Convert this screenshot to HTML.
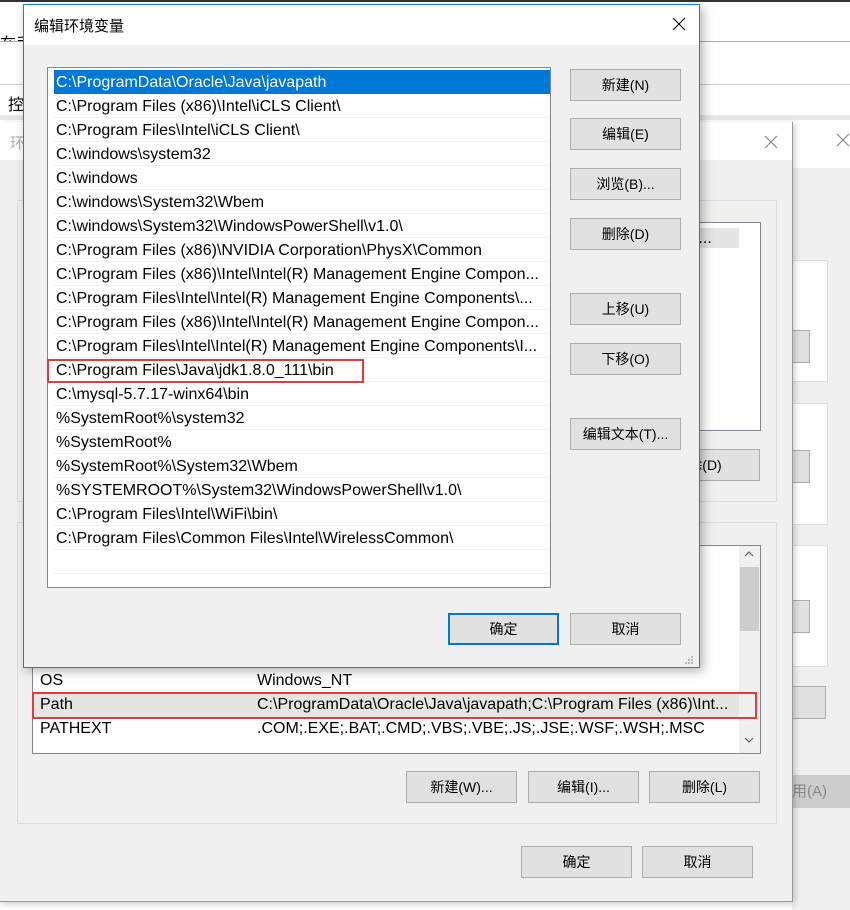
<!DOCTYPE html>
<html><head><meta charset="utf-8"><style>
*{box-sizing:border-box;margin:0;padding:0}
body{width:850px;height:906px;position:relative;overflow:hidden;background:#fff;font-family:"Liberation Sans","Noto Sans CJK SC",sans-serif;font-size:14px;color:#000}
.a{position:absolute}
.btn{position:absolute;background:#e1e1e1;border:1px solid #adadad;text-align:center;font-size:14px;line-height:30px;height:32px}
.row{position:absolute;left:6px;width:496px;height:24px;line-height:25px;padding-left:2px;border-bottom:1px solid #f0f0f0;font-size:16px;white-space:nowrap;overflow:hidden}
.x{position:absolute;width:14px;height:14px}
.t{font-size:16px}
</style></head><body>
<div class="a" style="left:0;top:0;width:850px;height:2px;background:#333"></div>
<div class="a" style="left:0;top:22px;width:40px;height:19px;overflow:hidden"><div class="a" style="left:0;top:8px;font-size:16px">在手</div></div>
<div class="a" style="left:0;top:41px;width:850px;height:1px;background:#aaa"></div>
<div class="a" style="left:0;top:84px;width:850px;height:1px;background:#ccc"></div>
<div class="a" style="left:8px;top:91px;font-size:16px">控</div>
<div class="a" style="left:0;top:115px;width:850px;height:5px;background:#e8e8e8"></div>
<!-- third window -->
<div class="a" style="left:792px;top:120px;width:58px;height:790px;background:#f0f0f0">
 <div class="a" style="left:0;top:0;width:58px;height:48px;background:#fff"></div>
 <svg class="x" style="left:44px;top:13px" viewBox="0 0 14 14"><path d="M1 1L13 13M13 1L1 13" stroke="#888" stroke-width="1.2"/></svg>
 <div class="a" style="left:0;top:140px;width:36px;height:122px;background:#fff;border:1px solid #ddd;border-left:0"></div>
 <div class="a" style="left:0;top:283px;width:36px;height:122px;background:#fff;border:1px solid #ddd;border-left:0"></div>
 <div class="a" style="left:0;top:425px;width:36px;height:122px;background:#fff;border:1px solid #ddd;border-left:0"></div>
 <div class="a" style="left:0;top:210px;width:18px;height:33px;background:#e1e1e1;border:1px solid #adadad;border-left:0"></div>
 <div class="a" style="left:0;top:330px;width:18px;height:33px;background:#e1e1e1;border:1px solid #adadad;border-left:0"></div>
 <div class="a" style="left:0;top:480px;width:18px;height:33px;background:#e1e1e1;border:1px solid #adadad;border-left:0"></div>
 <div class="a" style="left:0;top:566px;width:34px;height:33px;background:#e1e1e1;border:1px solid #adadad;border-left:0"></div>
 <div class="a" style="left:0;top:655px;width:58px;height:33px;background:#ccc;color:#888;line-height:33px;font-size:15px">用(A)</div>
</div>
<!-- env window -->
<div class="a" style="left:0;top:122px;width:793px;height:780px;background:#f0f0f0;border-right:1px solid #999;border-bottom:1px solid #999;box-shadow:2px 2px 6px rgba(0,0,0,.2)">
 <div class="a" style="left:0;top:0;width:792px;height:38px;background:#fff"></div>
 <div class="a" style="left:10px;top:10px;color:#aaa;font-size:15px">环</div>
 <svg class="x" style="left:764px;top:13px" viewBox="0 0 14 14"><path d="M1 1L13 13M13 1L1 13" stroke="#888" stroke-width="1.2"/></svg>
 <div class="a" style="left:17px;top:78px;width:760px;height:302px;border:1px solid #dcdcdc"></div>
 <div class="a" style="left:32px;top:100px;width:729px;height:209px;background:#fff;border:1px solid #828790"></div>
 <div class="a" style="left:600px;top:106px;width:139px;height:20px;background:#e5e5e5;font-size:16px;line-height:21px;padding-left:78px">s\J...</div>
 <div class="btn" style="left:650px;top:327px;width:110px">除(D)</div>
 <div class="a" style="left:17px;top:400px;width:760px;height:302px;border:1px solid #dcdcdc"></div>
 <div class="a" style="left:32px;top:423px;width:729px;height:209px;background:#fff;border:1px solid #828790"></div>
 <div class="a" style="left:739px;top:424px;width:21px;height:207px;background:#f0f0f0"></div>
 <div class="a" style="left:740px;top:445px;width:19px;height:64px;background:#cdcdcd"></div>
 <svg class="a" style="left:744px;top:428px" width="10" height="8" viewBox="0 0 10 8"><path d="M1 6L5 2L9 6" fill="none" stroke="#606060" stroke-width="1.2"/></svg>
 <svg class="a" style="left:744px;top:614px" width="10" height="8" viewBox="0 0 10 8"><path d="M1 2L5 6L9 2" fill="none" stroke="#606060" stroke-width="1.2"/></svg>
 <div class="a t" style="left:40px;top:550px">OS</div><div class="a t" style="left:257px;top:550px">Windows_NT</div>
 <div class="a" style="left:33px;top:571px;width:706px;height:24px;background:#e5e5e5"></div>
 <div class="a t" style="left:40px;top:574px">Path</div><div class="a t" style="left:257px;top:574px;white-space:nowrap">C:\ProgramData\Oracle\Java\javapath;C:\Program Files (x86)\Int...</div>
 <div class="a" style="left:32px;top:570px;width:725px;height:27px;border:2px solid #e63a3a"></div>
 <div class="a t" style="left:40px;top:598px">PATHEXT</div><div class="a t" style="left:257px;top:598px;white-space:nowrap">.COM;.EXE;.BAT;.CMD;.VBS;.VBE;.JS;.JSE;.WSF;.WSH;.MSC</div>
 <div class="btn" style="left:406px;top:649px;width:111px">新建(W)...</div>
 <div class="btn" style="left:528px;top:649px;width:111px">编辑(I)...</div>
 <div class="btn" style="left:649px;top:649px;width:111px">删除(L)</div>
 <div class="btn" style="left:521px;top:724px;width:111px">确定</div>
 <div class="btn" style="left:642px;top:724px;width:111px">取消</div>
</div>
<!-- main dialog -->
<div class="a" style="left:23px;top:4px;width:677px;height:664px;background:#f0f0f0;border:1px solid #1a7fd4;box-shadow:3px 3px 10px rgba(0,0,0,.3)">
 <div class="a" style="left:0;top:0;width:675px;height:40px;background:#fff"></div>
 <div class="a" style="left:10px;top:10px;font-size:15px">编辑环境变量</div>
 <svg class="x" style="left:648px;top:12px" viewBox="0 0 14 14"><path d="M1 1L13 13M13 1L1 13" stroke="#000" stroke-width="1.1"/></svg>
 <div class="a" style="left:23px;top:62px;width:504px;height:521px;background:#fff;border:1px solid #828790">
  <div class="row" style="top:2px;background:#0078d7;color:#fff;border-bottom-color:#0078d7">C:\ProgramData\Oracle\Java\javapath</div>
  <div class="row" style="top:26px">C:\Program Files (x86)\Intel\iCLS Client\</div>
  <div class="row" style="top:50px">C:\Program Files\Intel\iCLS Client\</div>
  <div class="row" style="top:74px">C:\windows\system32</div>
  <div class="row" style="top:98px">C:\windows</div>
  <div class="row" style="top:122px">C:\windows\System32\Wbem</div>
  <div class="row" style="top:146px">C:\windows\System32\WindowsPowerShell\v1.0\</div>
  <div class="row" style="top:170px">C:\Program Files (x86)\NVIDIA Corporation\PhysX\Common</div>
  <div class="row" style="top:194px">C:\Program Files (x86)\Intel\Intel(R) Management Engine Compon...</div>
  <div class="row" style="top:218px">C:\Program Files\Intel\Intel(R) Management Engine Components\...</div>
  <div class="row" style="top:242px">C:\Program Files (x86)\Intel\Intel(R) Management Engine Compon...</div>
  <div class="row" style="top:266px">C:\Program Files\Intel\Intel(R) Management Engine Components\I...</div>
  <div class="row" style="top:290px">C:\Program Files\Java\jdk1.8.0_111\bin</div>
  <div class="row" style="top:314px">C:\mysql-5.7.17-winx64\bin</div>
  <div class="row" style="top:338px">%SystemRoot%\system32</div>
  <div class="row" style="top:362px">%SystemRoot%</div>
  <div class="row" style="top:386px">%SystemRoot%\System32\Wbem</div>
  <div class="row" style="top:410px">%SYSTEMROOT%\System32\WindowsPowerShell\v1.0\</div>
  <div class="row" style="top:434px">C:\Program Files\Intel\WiFi\bin\</div>
  <div class="row" style="top:458px">C:\Program Files\Common Files\Intel\WirelessCommon\</div>
  <div class="row" style="top:482px"></div>
  <div class="a" style="left:-1px;top:291px;width:317px;height:24px;border:2px solid #e63a3a"></div>
 </div>
 <div class="btn" style="left:546px;top:64px;width:111px">新建(N)</div>
 <div class="btn" style="left:546px;top:113px;width:111px">编辑(E)</div>
 <div class="btn" style="left:546px;top:163px;width:111px">浏览(B)...</div>
 <div class="btn" style="left:546px;top:213px;width:111px">删除(D)</div>
 <div class="btn" style="left:546px;top:288px;width:111px">上移(U)</div>
 <div class="btn" style="left:546px;top:338px;width:111px">下移(O)</div>
 <div class="btn" style="left:546px;top:413px;width:111px">编辑文本(T)...</div>
 <div class="btn" style="left:424px;top:608px;width:111px;border:2px solid #0078d7;line-height:28px">确定</div>
 <div class="btn" style="left:546px;top:608px;width:111px">取消</div>
 <svg class="a" style="left:660px;top:650px" width="10" height="10" viewBox="0 0 10 10"><g fill="#bbb"><rect x="7" y="1" width="2" height="2"/><rect x="4" y="4" width="2" height="2"/><rect x="7" y="4" width="2" height="2"/><rect x="1" y="7" width="2" height="2"/><rect x="4" y="7" width="2" height="2"/><rect x="7" y="7" width="2" height="2"/></g></svg>
</div>
</body></html>
